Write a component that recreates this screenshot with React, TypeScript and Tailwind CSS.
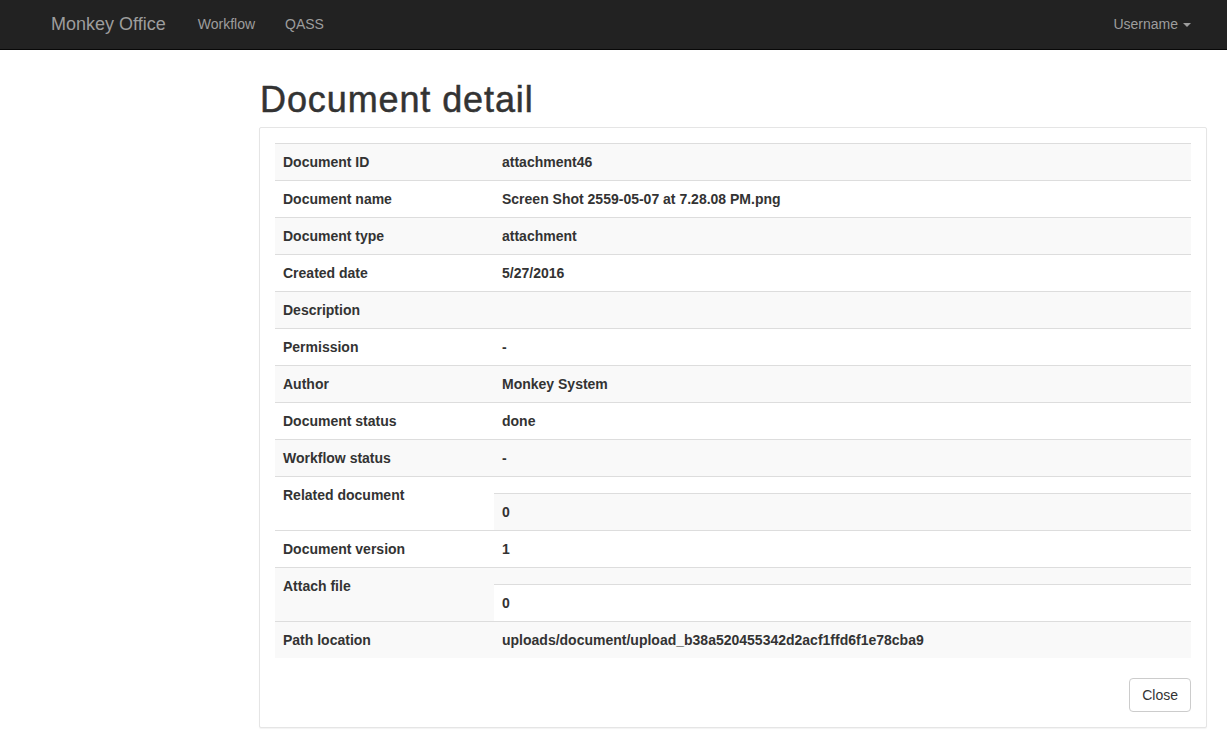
import React from 'react';

type Row = {
    label: string;
    value: string;
    striped: boolean;
    nested?: boolean;
    nestedStriped?: boolean;
};

const rows: Row[] = [
    { label: 'Document ID', value: 'attachment46', striped: true },
    { label: 'Document name', value: 'Screen Shot 2559-05-07 at 7.28.08 PM.png', striped: false },
    { label: 'Document type', value: 'attachment', striped: true },
    { label: 'Created date', value: '5/27/2016', striped: false },
    { label: 'Description', value: '', striped: true },
    { label: 'Permission', value: '-', striped: false },
    { label: 'Author', value: 'Monkey System', striped: true },
    { label: 'Document status', value: 'done', striped: false },
    { label: 'Workflow status', value: '-', striped: true },
    { label: 'Related document', value: '0', striped: false, nested: true, nestedStriped: true },
    { label: 'Document version', value: '1', striped: false },
    { label: 'Attach file', value: '0', striped: true, nested: true, nestedStriped: false },
    { label: 'Path location', value: 'uploads/document/upload_b38a520455342d2acf1ffd6f1e78cba9', striped: true },
];

const Navbar: React.FC = () => (
    <nav className="flex h-[50px] items-center justify-between border-b border-[#080808] bg-[#222] pl-[36px] pr-[21px] text-[14px] text-[#9d9d9d]">
        <div className="flex items-center pb-[2px]">
            <a className="pl-[15px] pr-[17px] text-[18px] leading-5">Monkey Office</a>
            <a className="px-[15px] leading-5">Workflow</a>
            <a className="px-[15px] leading-5">QASS</a>
        </div>
        <a className="flex items-center px-[15px] pb-[2px] leading-5">
            Username
            {/* caret */}
            <span className="ml-[5px] mt-[2px] h-0 w-0 border-x-[4px] border-t-[4px] border-x-transparent border-t-[#9d9d9d]" />
        </a>
    </nav>
);

const DetailRow: React.FC<{ row: Row }> = ({ row }) => (
    <div className={`flex border-t border-[#ddd] ${row.striped ? 'bg-[#f9f9f9]' : 'bg-white'}`}>
        <div className="w-[219px] shrink-0 p-2 leading-5">{row.label}</div>
        {row.nested ? (
            <div className="flex-1 pt-4">
                <div className={`border-t border-[#ddd] p-2 leading-5 ${row.nestedStriped ? 'bg-[#f9f9f9]' : 'bg-white'}`}>
                    {row.value}
                </div>
            </div>
        ) : (
            <div className="min-h-[36px] flex-1 p-2 leading-5">{row.value}</div>
        )}
    </div>
);

export default function App() {
    return (
        <div className="min-h-[738px] bg-white font-['Liberation_Sans',Arial,sans-serif] text-[14px] text-[#333]">
            <Navbar />

            <main className="ml-[259px] w-[948px]">
                <h1 className="mb-[7px] mt-[30px] pl-[1px] text-[36px] font-medium leading-[1.1] tracking-[0.9px] text-[#333] [-webkit-text-stroke:0.5px_#333]">
                    Document detail
                </h1>

                {/* Detail panel */}
                <div className="rounded-[2px] border border-[#e5e5e5] bg-white p-[15px] shadow-[0_1px_1px_rgba(0,0,0,0.05)]">
                    <div className="mb-5 font-bold">
                        {rows.map((row) => (
                            <DetailRow key={row.label} row={row} />
                        ))}
                    </div>
                    <div className="flex justify-end">
                        <button className="rounded-[4px] border border-[#ccc] bg-white px-3 py-[6px] text-[14px] leading-5 text-[#333]">
                            Close
                        </button>
                    </div>
                </div>
            </main>
        </div>
    );
}
